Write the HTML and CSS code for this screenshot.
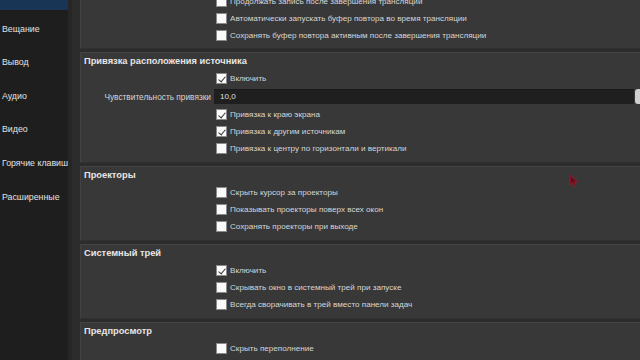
FILE: index.html
```html
<!DOCTYPE html>
<html lang="ru">
<head>
<meta charset="utf-8">
<link rel="stylesheet" href="styles.css">
</head>
<body>
<div class="app">
  <nav class="sidebar">
    <div class="nav-list">
      <div class="nav-item selected">Общие</div>
      <div class="nav-item">Вещание</div>
      <div class="nav-item">Вывод</div>
      <div class="nav-item">Аудио</div>
      <div class="nav-item">Видео</div>
      <div class="nav-item">Горячие клавиши</div>
      <div class="nav-item">Расширенные</div>
    </div>
  </nav>
  <main class="content">
    <div class="scroll">
      <section class="group first">
        <div class="row"><span class="cb"></span><span>Продолжать запись после завершения трансляции</span></div>
        <div class="row"><span class="cb"></span><span>Автоматически запускать буфер повтора во время трансляции</span></div>
        <div class="row"><span class="cb"></span><span>Сохранять буфер повтора активным после завершения трансляции</span></div>
      </section>
      <section class="group">
        <div class="title">Привязка расположения источника</div>
        <div class="row"><span class="cb checked"></span><span>Включить</span></div>
        <div class="row field-row"><span class="label">Чувствительность привязки</span><span class="input">10,0</span><span class="spin"></span></div>
        <div class="row"><span class="cb checked"></span><span>Привязка к краю экрана</span></div>
        <div class="row"><span class="cb checked"></span><span>Привязка к другим источникам</span></div>
        <div class="row"><span class="cb"></span><span>Привязка к центру по горизонтали и вертикали</span></div>
      </section>
      <section class="group">
        <div class="title">Проекторы</div>
        <div class="row"><span class="cb"></span><span>Скрыть курсор за проекторы</span></div>
        <div class="row"><span class="cb"></span><span>Показывать проекторы поверх всех окон</span></div>
        <div class="row"><span class="cb"></span><span>Сохранять проекторы при выходе</span></div>
      </section>
      <section class="group">
        <div class="title">Системный трей</div>
        <div class="row"><span class="cb checked"></span><span>Включить</span></div>
        <div class="row"><span class="cb"></span><span>Скрывать окно в системный трей при запуске</span></div>
        <div class="row"><span class="cb"></span><span>Всегда сворачивать в трей вместо панели задач</span></div>
      </section>
      <section class="group">
        <div class="title">Предпросмотр</div>
        <div class="row"><span class="cb"></span><span>Скрыть переполнение</span></div>
        <div class="row"><span class="cb"></span><span>Показывать области</span></div>
      </section>
    </div>
  </main>
</div>
<svg class="cursor" width="10" height="14" viewBox="0 0 10 14"><path d="M1 1 L1 11 L3.5 8.6 L5.4 12.6 L7 11.8 L5.2 8 L8.6 8 Z" fill="#5a0f1a" stroke="#a0182c" stroke-width="1"/></svg>
</body>
</html>
```
FILE: styles.css
```css
html, body {
  margin: 0;
  padding: 0;
  width: 640px;
  height: 360px;
  overflow: hidden;
  background: #2c2c2c;
  font-family: "Liberation Sans", "Noto Sans", sans-serif;
  color: #dcdcdc;
}
.app {
  display: flex;
  width: 640px;
  height: 360px;
}
.sidebar {
  width: 68px;
  flex: none;
  background: #1e1e1e;
  overflow: hidden;
}
.nav-list {
  margin-top: -21px;
}
.nav-item {
  height: 33.6px;
  line-height: 33.6px;
  padding-left: 2px;
  font-size: 8.8px;
  white-space: nowrap;
  color: #e2e2e2;
}
.nav-item.selected {
  background: #193556;
  height: 31px;
  margin-bottom: 2.6px;
}
.content {
  flex: 1;
  overflow: hidden;
  padding-left: 12px;
  background: #2c2c2c;
  box-shadow: inset 4px 0 0 #262626;
}
.scroll {
  width: 580px;
  display: flex;
  flex-direction: column;
  gap: 3px;
}
.group {
  background: #383838;
  border-top: 1px solid #444;
  border-left: 1px solid #424242;
  border-bottom: 1px solid #303030;
  padding: 2px 0 5px 0;
}
.group.first {
  margin-top: -10px;
  padding-bottom: 4px;
}
.title {
  height: 13px;
  line-height: 13px;
  margin-bottom: 2px;
  padding-left: 3px;
  font-size: 9.3px;
  font-weight: bold;
  color: #e6e6e6;
}
.row {
  height: 17px;
  display: flex;
  align-items: center;
  padding-left: 135px;
  font-size: 8.1px;
  color: #d6d6d6;
  white-space: nowrap;
}
.cb {
  width: 9px;
  height: 9px;
  background: #fafafa;
  border: 1px solid #8a8a8a;
  margin-right: 3px;
  flex: none;
  position: relative;
}
.cb.checked::after {
  content: "";
  position: absolute;
  left: 2.5px;
  top: 0.5px;
  width: 3px;
  height: 6px;
  border-right: 1.3px solid #333;
  border-bottom: 1.3px solid #333;
  transform: rotate(40deg);
}
.field-row {
  height: 19px;
  padding-left: 0;
}
.label {
  width: 130px;
  text-align: right;
  margin-right: 3px;
  flex: none;
  font-size: 8.3px;
}
.input {
  width: 414px;
  height: 14px;
  line-height: 14px;
  padding-left: 6px;
  background: #1f1f1f;
  border-top: 1px solid #191919;
  color: #e0e0e0;
  flex: none;
}
.spin {
  width: 10px;
  height: 15px;
  margin-left: 1px;
  background: #cfcfcf;
  border-radius: 3px 0 0 3px;
  flex: none;
}
.cursor {
  position: absolute;
  left: 569px;
  top: 174px;
}
```
